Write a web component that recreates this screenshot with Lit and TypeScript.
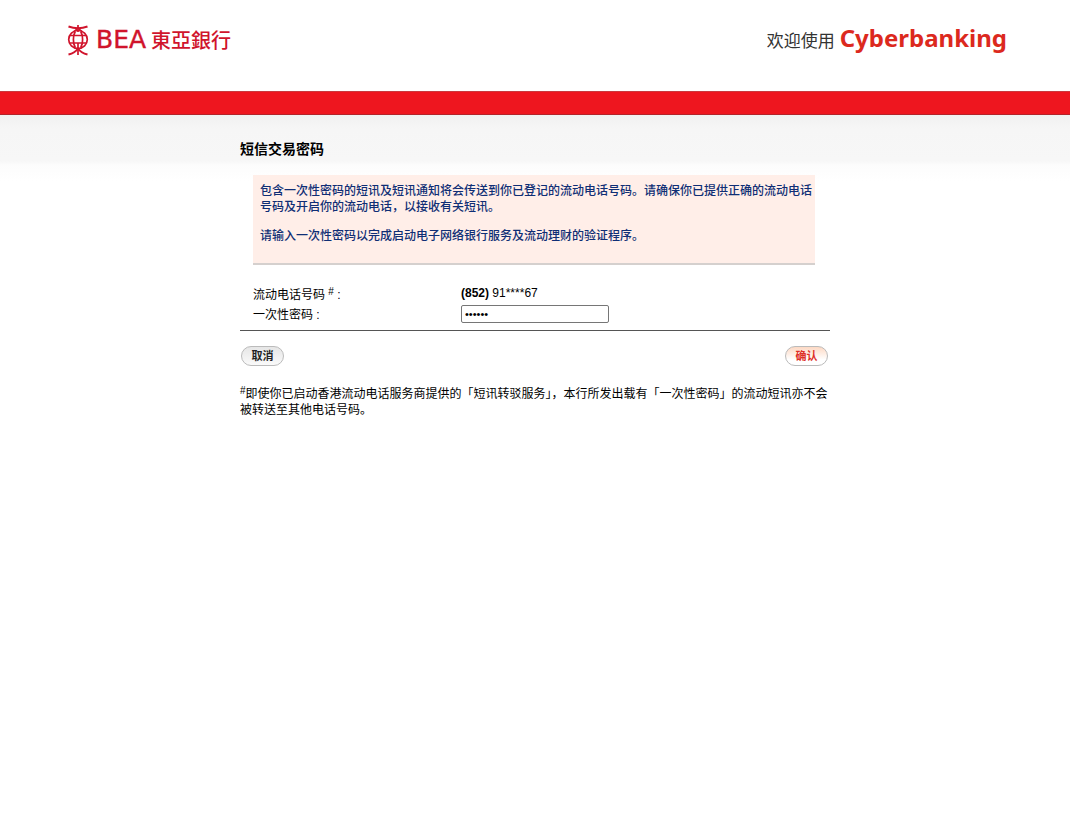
import { LitElement, html, css } from "lit";
import { customElement, state } from "lit/decorators.js";

@customElement("bank-logo")
export class BankLogo extends LitElement {
  static styles = css`
    :host {
      display: flex;
      align-items: center;
      color: #d0142c;
    }
    .emblem {
      width: 22px;
      height: 32px;
      margin-right: 7px;
    }
    .latin {
      font: 25px/32px "DejaVu Sans", sans-serif;
      margin-right: 5px;
      -webkit-text-stroke: 0.4px currentColor;
    }
    .han {
      font: 500 20px/28px "Noto Sans CJK TC", sans-serif;
    }
  `;

  render() {
    return html`
      <svg class="emblem" viewBox="0 0 22 32" fill="none" stroke="currentColor" stroke-width="1.7" aria-hidden="true">
        <path d="M1.5 2.5Q6 4.2 11 4.2Q16 4.2 20.5 2.5" stroke-width="2" />
        <path d="M11 1V8M11 19V31" />
        <path d="M7 7.5L11 4L15 7.5" stroke-width="1.5" />
        <ellipse cx="11" cy="15.5" rx="9.3" ry="9" />
        <path d="M8.2 7.5Q6.2 11.5 6.4 15.5Q6.2 19.5 8.2 23.5M13.8 7.5Q15.8 11.5 15.6 15.5Q15.8 19.5 13.8 23.5" />
        <path d="M3 11.5H19M3 19H19" stroke-width="1.7" />
        <path d="M1.5 30.5Q8 29 11 24.5Q14 29 20.5 30.5" stroke-width="2" />
      </svg>
      <span class="latin">BEA</span>
      <span class="han" lang="zh-Hant">東亞銀行</span>
    `;
  }
}

@customElement("app-root")
export class AppRoot extends LitElement {
  static styles = css`
    :host {
      display: block;
      min-height: 100vh;
      background: #fff;
      color: #000;
      font: 12px/16px "Liberation Sans", "Noto Sans CJK SC", sans-serif;
    }
    .masthead {
      display: flex;
      align-items: center;
      justify-content: space-between;
      box-sizing: border-box;
      min-height: 91px;
      padding: 0 63px 12px 67px;
    }
    .welcome {
      display: flex;
      align-items: baseline;
      gap: 5px;
      margin: 0;
      font-size: 17px;
      line-height: 32px;
      color: #333;
    }
    .product {
      font: 700 24px/32px "Noto Sans", "Open Sans", sans-serif;
      color: #dc291e;
    }
    .band {
      height: 22px;
      background: #ee161f;
      border-top: 1px solid #c93a3e;
      border-bottom: 1px solid #b3242a;
    }
    .backdrop {
      padding: 24px 16px;
      background: linear-gradient(#f1f1f1 0, #f6f6f6 14px, #f7f7f7 46px, #fcfcfc 50px, #fff 66px) no-repeat;
    }
    .panel {
      max-width: 590px;
      margin: 0 auto;
    }
    h1 {
      margin: 0 0 16px;
      font-size: 14px;
      line-height: 20px;
    }
    .notice {
      margin: 0 15px 0 13px;
      padding: 8px 3px 19px 7px;
      background: #ffeee8;
      border-bottom: 2px solid #d5d0ce;
      color: #0f2e75;
      font-weight: 500;
    }
    .notice p {
      margin: 0 0 13px;
    }
    .notice p:last-child {
      margin: 0;
    }
    .fields {
      display: grid;
      grid-template-columns: 208px 1fr;
      row-gap: 1px;
      align-items: center;
      padding: 19px 12px 7px 13px;
      border-bottom: 1px solid #555;
    }
    .fields > * {
      box-sizing: border-box;
      min-height: 19px;
      line-height: 19px;
    }
    .fields > .name {
      padding-top: 4px;
      line-height: 15px;
    }
    sup {
      font-size: 10px;
      line-height: 0;
      vertical-align: 4px;
    }
    .fields > .code {
      width: 148px;
      height: 18px;
      min-height: 0;
      padding: 1px 3px;
      border: 1px solid #767676;
      border-radius: 2px;
      background: #fff;
      color: #000;
      font: 11px/14px "Liberation Sans", sans-serif;
    }
    .actions {
      display: flex;
      justify-content: space-between;
      padding: 15px 2px 20px 1px;
    }
    button {
      box-sizing: border-box;
      min-width: 43px;
      height: 20px;
      padding: 0 8px 2px;
      border: 1px solid #bbb;
      border-radius: 10px;
      background: linear-gradient(#e6e6e6, #fafafa);
      color: #222;
      font: 700 11px/16px "Noto Sans CJK SC", sans-serif;
      cursor: pointer;
    }
    .confirm {
      background: linear-gradient(#fdd9c4, #fff 70%);
      color: #de3028;
    }
    .footnote {
      margin: 0;
    }
  `;

  @state() private code = "123456";

  private onInput(event: Event) {
    this.code = (event.target as HTMLInputElement).value;
  }

  render() {
    return html`
      <header class="masthead">
        <bank-logo></bank-logo>
        <p class="welcome" lang="zh-Hans">欢迎使用 <span class="product">Cyberbanking</span></p>
      </header>
      <div class="band"></div>
      <main class="backdrop" lang="zh-Hans">
        <form class="panel" @submit=${(event: Event) => event.preventDefault()}>
          <h1>短信交易密码</h1>
          <div class="notice">
            <p>包含一次性密码的短讯及短讯通知将会传送到你已登记的流动电话号码。请确保你已提供正确的流动电话号码及开启你的流动电话，以接收有关短讯。</p>
            <p>请输入一次性密码以完成启动电子网络银行服务及流动理财的验证程序。</p>
          </div>
          <div class="fields">
            <span class="name">流动电话号码 <sup>#</sup> :</span>
            <span><b>(852)</b> 91****67</span>
            <label class="name" for="code">一次性密码 :</label>
            <input class="code" id="code" type="password" autocomplete="off" .value=${this.code} @input=${this.onInput} />
          </div>
          <div class="actions">
            <button type="button">取消</button>
            <button class="confirm" type="submit">确认</button>
          </div>
          <p class="footnote"><sup>#</sup>即使你已启动香港流动电话服务商提供的「短讯转驳服务」，本行所发出载有「一次性密码」的流动短讯亦不会被转送至其他电话号码。</p>
        </form>
      </main>
    `;
  }
}
